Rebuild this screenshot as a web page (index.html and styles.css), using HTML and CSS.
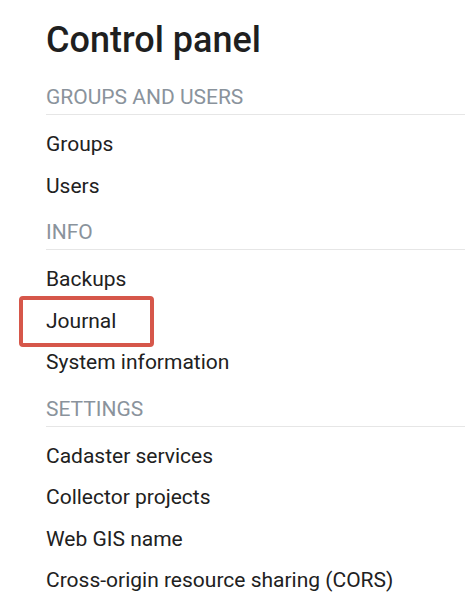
FILE: index.html
```html
<!DOCTYPE html>
<html>
<head>
<meta charset="utf-8">
<link rel="stylesheet" href="styles.css">
</head>
<body>
<div class="panel">
  <h1 class="title">Control panel</h1>
  <section class="group">
    <div class="group-title">GROUPS AND USERS</div>
    <ul class="items">
      <li class="item">Groups</li>
      <li class="item">Users</li>
    </ul>
  </section>
  <section class="group">
    <div class="group-title">INFO</div>
    <ul class="items">
      <li class="item">Backups</li>
      <li class="item highlight">Journal</li>
      <li class="item">System information</li>
    </ul>
  </section>
  <section class="group">
    <div class="group-title">SETTINGS</div>
    <ul class="items">
      <li class="item">Cadaster services</li>
      <li class="item">Collector projects</li>
      <li class="item">Web GIS name</li>
      <li class="item">Cross-origin resource sharing (CORS)</li>
    </ul>
  </section>
</div>
</body>
</html>
```
FILE: styles.css
```css
html, body {
  margin: 0;
  padding: 0;
  background: #ffffff;
}
body {
  font-family: Roboto, "Liberation Sans", sans-serif;
  color: #212121;
}
.panel {
  display: flex;
  flex-direction: column;
  padding: 19px 0 0 46px;
}
.title {
  margin: 0 0 11px 0;
  font-size: 36px;
  line-height: 42px;
  font-weight: 500;
  color: #1f1f1f;
}
.group {
  display: flex;
  flex-direction: column;
}
.group-title {
  margin-top: 13px;
  font-size: 21px;
  line-height: 24px;
  padding-bottom: 5px;
  border-bottom: 1px solid #e6e6e6;
  color: #8a939c;
}
.items {
  list-style: none;
  margin: 0;
  padding: 9px 0 0 0;
}
.item {
  font-size: 21px;
  line-height: 41.5px;
  color: #212121;
}
.highlight {
  position: relative;
}
.highlight::after {
  content: "";
  position: absolute;
  left: -27px;
  top: -4.5px;
  width: 127px;
  height: 43px;
  border: 4px solid #d6574a;
  border-radius: 4px;
}
```
